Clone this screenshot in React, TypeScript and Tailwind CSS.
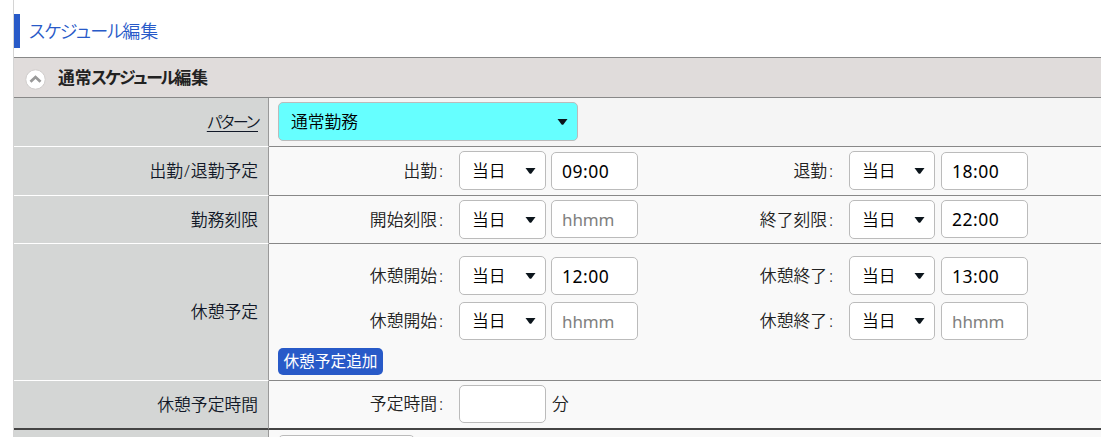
import React from 'react';

interface SelectBoxProps {
  value: string;
  className: string;
}

const SelectBox: React.FC<SelectBoxProps> = ({ value, className }) => (
  <div className={`flex shrink-0 items-center justify-between rounded-[5px] border border-[#bbb] pl-3 pr-[9px] text-black ${className}`}>
    <span>{value}</span>
    <svg className="h-[6px] w-[11px]" viewBox="0 0 11 6">
      <path d="M0.5 0h10L6.6 5.2Q5.5 6.4 4.4 5.2Z" fill="#0c151c" />
    </svg>
  </div>
);

interface TimeFieldProps {
  label: string;
  time: string;
  selectClass?: string;
  inputClass?: string;
}

const TimeField: React.FC<TimeFieldProps> = ({
  label,
  time,
  selectClass = 'w-[87px] h-[39px]',
  inputClass = 'ml-[5px] h-[38px]',
}) => (
  <div className="flex w-[390px] items-end">
    <div className="flex h-[38px] w-[175px] items-center justify-end">
      {label}
      <span className="w-[7px] pl-[2px]">:</span>
    </div>
    <SelectBox value="当日" className={`ml-[15px] bg-white ${selectClass}`} />
    <input
      className={`w-[87px] shrink-0 rounded-[5px] border border-[#bbb] bg-white px-[10px] text-[17.5px] font-normal tracking-[0.5px] text-black placeholder:text-[17px] placeholder:tracking-[-0.1px] placeholder:text-[#808080] ${inputClass}`}
      defaultValue={time}
      placeholder="hhmm"
    />
  </div>
);

interface RowProps {
  label: React.ReactNode;
  className: string;
  border?: string;
  children?: React.ReactNode;
}

const Row: React.FC<RowProps> = ({ label, className, border, children }) => (
  <div className={`flex ${className}`}>
    <div className={`flex w-[255px] shrink-0 items-center justify-end border-r border-r-[#999] bg-[#d4d6d5] pr-[10px] text-[#111827] ${border ?? 'border-b border-b-white'}`}>
      {label}
    </div>
    <div className={`min-w-0 grow bg-[#f9f9f9] ${border ?? 'border-b border-b-[#888]'}`}>{children}</div>
  </div>
);

const RIGHT = 'w-[86px] h-[39px]';

const App: React.FC = () => {
  return (
    <div className="h-[437px] w-[1101px] overflow-hidden bg-white pl-[13px] font-['Noto_Sans','Noto_Sans_CJK_JP',sans-serif] text-[16.8px] leading-6 font-[350] text-[#222]">
      <div className="h-full border-l border-[#d4d4d4]">
        <div className="h-[57px] pt-[14px]">
          <h1 className="flex h-[34px] items-center border-l-[6px] border-[#285ac8] pl-[8px] text-[18px] tracking-[-2.1px] text-[#285ac8]">
            <span>スケジュール</span>
            <span className="tracking-normal">編集</span>
          </h1>
        </div>

        <div className="flex h-[41px] items-center border-y border-[#888] bg-[#e0dcdb]">
          <svg className="mt-[3px] ml-[11px] h-[21px] w-[21px]" viewBox="0 0 21 21">
            <circle cx="10.5" cy="10.5" r="9.7" fill="#fff" stroke="#d0cdcc" />
            <path d="M5.5 12.8L10.5 8.1L15.5 12.8" fill="none" stroke="#999" strokeWidth="2.8" />
          </svg>
          <h2 className="ml-[12px] font-bold">
            <span>通常</span>
            <span className="-ml-px tracking-[-2.6px]">スケジュール</span>
            <span>編集</span>
          </h2>
        </div>

        <Row label={<span className="text-[16px] tracking-[-3px] underline underline-offset-[3px]">パターン</span>} className="h-[49px]">
          <div className="h-full bg-[#f5f5f5] pt-[4px] pl-[9px]">
            <SelectBox value="通常勤務" className="h-[39px] w-[300px] bg-[#66ffff]" />
          </div>
        </Row>

        <Row label={<>出勤<span className="px-px">/</span>退勤予定</>} className="h-[49px]">
          <div className="flex pt-[4px]">
            <TimeField label="出勤" time="09:00" />
            <TimeField label="退勤" time="18:00" selectClass={RIGHT} inputClass="ml-[6px] h-[38px]" />
          </div>
        </Row>

        <Row label="勤務刻限" className="h-12">
          <div className="flex pt-[4px]">
            <TimeField label="開始刻限" time="" inputClass="mb-px ml-[5px] h-[38px]" />
            <TimeField label="終了刻限" time="22:00" selectClass={RIGHT} inputClass="mb-px ml-[6px] h-[38px]" />
          </div>
        </Row>

        <Row label="休憩予定" className="h-[137px]">
          <div className="flex pt-3">
            <TimeField label="休憩開始" time="12:00" />
            <TimeField label="休憩終了" time="13:00" selectClass={RIGHT} inputClass="ml-[6px] h-[38px]" />
          </div>
          <div className="flex pt-[7px]">
            <TimeField label="休憩開始" time="" selectClass="w-[87px] h-[38px]" />
            <TimeField label="休憩終了" time="" selectClass="w-[86px] h-[38px]" inputClass="ml-[6px] h-[38px]" />
          </div>
          <button className="mt-2 ml-[9px] flex h-[27px] w-[105px] items-center justify-center rounded-[5px] bg-[#285ac8] pb-px text-[15.7px] font-normal whitespace-nowrap text-white">
            休憩予定追加
          </button>
        </Row>

        <Row label="休憩予定時間" className="h-[49px]" border="border-b-2 border-b-[#444]">
          <div className="flex items-center pt-[4px]">
            <div className="flex w-[175px] justify-end">
              予定時間
              <span className="w-[7px] pl-[2px]">:</span>
            </div>
            <input className="ml-[15px] h-[38px] w-[87px] rounded-[5px] border border-[#bbb] bg-white" />
            <span className="ml-[6px]">分</span>
          </div>
        </Row>

        <Row label="" className="h-12">
          <div className="pt-[5px] pl-[9px]">
            <div className="h-[39px] w-[137px] rounded-[5px] border border-[#bbb] bg-white" />
          </div>
        </Row>
      </div>
    </div>
  );
};

export default App;
